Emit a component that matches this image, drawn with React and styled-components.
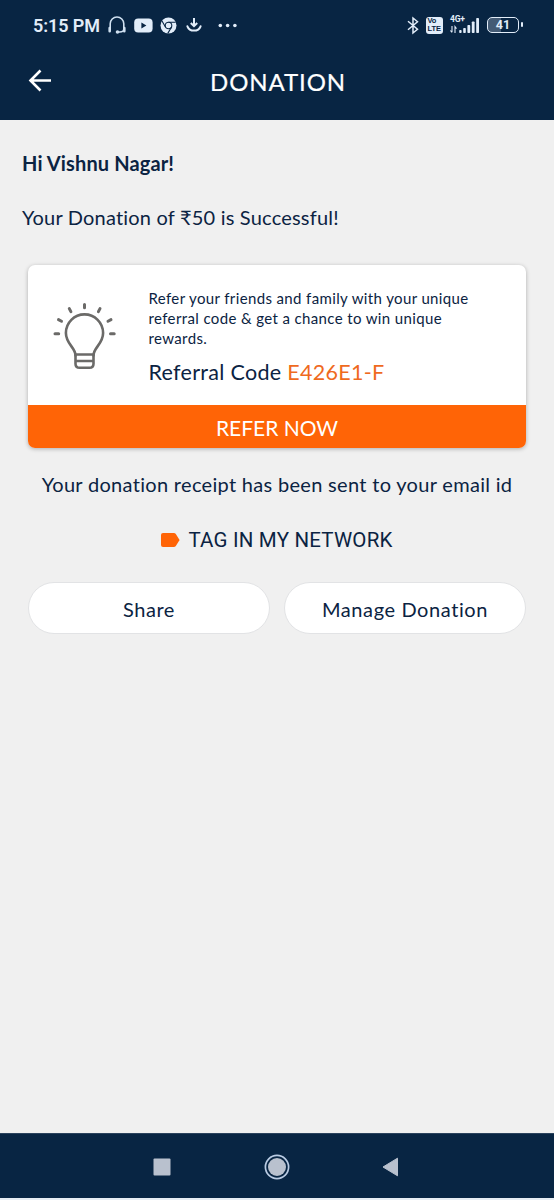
import React from 'react';
import styled, { createGlobalStyle } from 'styled-components';

const GlobalStyle = createGlobalStyle`
  * { box-sizing: border-box; }
  body { margin: 0; background: #f0f0f0; }
  svg { display: block; flex: none; }
`;

const navy = '#082543';
const orange = '#ff6406';
const ink = '#0b2342';

const Screen = styled.div`
  display: flex;
  flex-direction: column;
  width: 554px;
  height: 1200px;
  background: #f0f0f0;
  color: ${ink};
  font-family: Lato, 'Noto Sans', sans-serif;
  font-size: 20px;
  white-space: nowrap;
`;

const StatusBar = styled.div`
  display: flex;
  align-items: center;
  justify-content: space-between;
  height: 50px;
  padding: 0 35px 0 33px;
  background: ${navy};
  color: #e2edf9;
`;

const StatusGroup = styled.div`
  display: flex;
  align-items: center;
  height: 50px;
`;

const Clock = styled.span`
  width: 74px;
  padding-top: 1px;
  font: 600 18px/22px Roboto, sans-serif;
  letter-spacing: -0.1px;
`;

const Header = styled.header`
  display: grid;
  grid-template-columns: 80px 1fr 78px;
  align-items: center;
  height: 70px;
  padding-bottom: 8px;
  background: ${navy};
  color: #fff;
`;

const BackButton = styled.div`
  padding-left: 28px;
`;

const Title = styled.h1`
  margin: 2px 0 0;
  text-align: center;
  font-size: 24px;
  font-weight: 400;
  line-height: 30px;
  letter-spacing: ${(p) => p.$spacing}px;
  -webkit-text-stroke: 0.2px #fff;
`;

const Content = styled.main`
  flex: 1;
  padding: 31px 28px 0;
`;

const Greeting = styled.p`
  margin: 0 0 30px -6px;
  font-weight: ${(p) => (p.$strong ? 700 : 400)};
  line-height: 24px;
  letter-spacing: ${(p) => p.$spacing}px;
`;

const Card = styled.section`
  height: 183px;
  margin-top: 36px;
  overflow: hidden;
  border-radius: 7px;
  background: #fff;
  box-shadow: 0 1px 4px rgba(0, 0, 0, 0.28);
`;

const CardBody = styled.div`
  display: flex;
  height: 140px;
  padding: 23px 0 0 25px;
`;

const BulbSlot = styled.div`
  width: 95.5px;
  padding-top: 14px;
`;

const CardText = styled.p`
  margin: 0;
  font-size: 15px;
  line-height: 20px;
  letter-spacing: ${(p) => p.$spacing}px;
`;

const ReferralLine = styled.p`
  margin: 10px 0 0;
  font-size: 21.5px;
  line-height: 28px;
  letter-spacing: ${(p) => p.$spacing}px;
`;

const Code = styled.span`
  color: #ef6a1e;
`;

const ReferButton = styled.div`
  height: 43px;
  padding-top: 1px;
  background: ${orange};
  color: #fff;
  text-align: center;
  font-size: 21px;
  line-height: 44px;
  letter-spacing: ${(p) => p.$spacing}px;
`;

const Receipt = styled.p`
  margin: 24px 0 0;
  text-align: center;
  line-height: 24px;
  letter-spacing: ${(p) => p.$spacing}px;
`;

const TagLine = styled.div`
  display: flex;
  align-items: center;
  justify-content: center;
  gap: 8px;
  margin-top: 32px;
  font: 400 20.5px/24px Roboto, sans-serif;
  letter-spacing: ${(p) => p.$spacing}px;
`;

const Actions = styled.div`
  display: grid;
  grid-template-columns: 1fr 1fr;
  gap: 14px;
  margin-top: 30px;
`;

const PillButton = styled.div`
  height: 52px;
  padding-top: 1px;
  border: 1.5px solid #e2e3e5;
  border-radius: 26px;
  background: #fff;
  text-align: center;
  line-height: 50px;
  letter-spacing: ${(p) => p.$spacing}px;
`;

const NavBar = styled.nav`
  display: flex;
  align-items: center;
  height: 67px;
  padding: 2px 155px 0 153px;
  justify-content: space-between;
  border-top: 1px solid #2b435d;
  border-bottom: 2px solid #e6edf4;
  background: ${navy};
`;

const Icon = styled.svg`
  margin-left: ${(p) => p.$gap || 0}px;
`;

const Headphones = () => (
  <Icon width="20" height="20" viewBox="0 0 20 20" fill="none" stroke="#cfe0f0" strokeWidth="1.6">
    <path d="M3.2 14V8.8a6.8 6.8 0 0 1 13.6 0V14M16.8 14c0 2-1.5 3-4 3h-2" />
    <path d="M2.7 13v3.3M17.3 13v3.3" strokeWidth="2.6" strokeLinecap="round" />
    <circle cx="10.5" cy="17" r="1" fill="#cfe0f0" />
  </Icon>
);

const Video = () => (
  <Icon $gap={7} width="19" height="15" viewBox="0 0 19 15">
    <rect x="0.2" y="0.5" width="18.4" height="14" rx="4" fill="#e2edf9" />
    <path d="M7.4 4.6v5.8l5-2.9z" fill={navy} />
  </Icon>
);

const Browser = () => (
  <Icon $gap={7} width="17" height="17" viewBox="0 0 17 17">
    <circle cx="8.5" cy="8.5" r="8" fill="#e2edf9" />
    <circle cx="8.5" cy="8.5" r="3.3" fill="none" stroke={navy} strokeWidth="1.1" />
    <path d="M8.5 5.2h7.2M5.6 10.2 2 4M11.4 10.2l-3.6 6.2" stroke={navy} strokeWidth="1.1" fill="none" />
  </Icon>
);

const Download = () => (
  <Icon $gap={9} width="16" height="16" viewBox="0 0 16 16" fill="none" stroke="#e2edf9" strokeWidth="2">
    <path d="M8 1v7.5M4.8 6 8 9.2 11.2 6" />
    <path d="M1.4 9.3c1.1 3 3.4 4.3 6.6 4.3s5.5-1.3 6.6-4.3" strokeLinecap="round" />
  </Icon>
);

const More = () => (
  <Icon $gap={16} width="20" height="5" viewBox="0 0 20 5" fill="#e2edf9">
    <circle cx="2.3" cy="2.5" r="1.8" />
    <circle cx="9.6" cy="2.5" r="1.8" />
    <circle cx="16.9" cy="2.5" r="1.8" />
  </Icon>
);

const Bluetooth = () => (
  <Icon width="12" height="19" viewBox="0 0 12 19" fill="none" stroke="#e2edf9" strokeWidth="1.5">
    <path d="M1 5.2 10.5 13.2 6 17V2l4.5 3.8L1 13.8" />
  </Icon>
);

const VolteBadge = styled.div`
  display: flex;
  flex-direction: column;
  width: 17px;
  height: 17px;
  margin-left: 7px;
  padding: 0 0 0 1.5px;
  border-radius: 3px;
  background: #e2edf9;
  color: ${navy};
  font: 800 7.5px/8px 'Liberation Sans', sans-serif;
  letter-spacing: -0.1px;
`;

const BadgeLine = styled.span`
  display: block;
  height: 8px;
`;

const Signal = styled.div`
  display: flex;
  width: 30px;
  height: 18px;
  margin-left: 7px;
  svg { overflow: visible; }
`;

const NetworkType = styled.span`
  width: 9px;
  margin-top: -1px;
  font: 700 8.5px/9px Roboto, sans-serif;
  letter-spacing: -0.2px;
`;

const SignalBars = () => (
  <Icon width="21" height="18" viewBox="0 0 21 18" fill="#e2edf9">
    <rect x="0.2" y="14" width="2.4" height="3" rx="0.8" />
    <rect x="4.2" y="12" width="2.6" height="5" rx="0.8" />
    <rect x="8.4" y="9" width="2.8" height="8" rx="0.8" />
    <rect x="12.8" y="5.5" width="2.8" height="11.5" rx="0.8" />
    <rect x="17.2" y="2" width="2.8" height="15" rx="0.8" />
    <path d="M-7 10v6.3m-1.6-1.8L-7 16.3M-4 17v-6.3l1.5 2" fill="none" stroke="#e2edf9" strokeWidth="1.1" />
  </Icon>
);

const Battery = styled.div`
  position: relative;
  width: 32px;
  height: 16px;
  margin-left: 7px;
  border: 1.5px solid #e2edf9;
  border-radius: 5px;
  background: linear-gradient(90deg, #445b75 42%, transparent 42%);
  text-align: center;
  font: 700 12.5px/14px Roboto, sans-serif;
  &::after {
    content: '';
    position: absolute;
    top: 4px;
    right: -4.5px;
    width: 2px;
    height: 5px;
    border-radius: 1px;
    background: #e2edf9;
  }
`;

const BackArrow = () => (
  <svg width="24" height="24" viewBox="0 0 24 24" fill="none" stroke="#fff" strokeWidth="2.6">
    <path d="M23 11.5H2.5M12.5 1.5 2.5 11.5l10 10" />
  </svg>
);

const Bulb = () => (
  <svg width="64" height="69" viewBox="0 0 64 69" fill="none" stroke="#6b6a68" strokeWidth="2.6" strokeLinecap="round">
    <path d="M22.5 53.5c0-8-9.6-11.5-9.6-22.5a18.2 18.2 0 0 1 37.2 0c0 11-9.6 14.5-9.6 22.5" />
    <path d="M22.5 52.5v9.2c0 2.6 1.5 4.1 4.1 4.1h9.8c2.6 0 4.1-1.5 4.1-4.1v-9.2zM23 59h17" />
    <path d="M31.5 2.5v3.2M16.3 6.6l1.6 3M47 6.6l-1.6 3M5.5 17.6l3 1.6M58 17.6l-3 1.6M2 31.8h3.7M57.5 31.8h3.7" strokeWidth="3" />
  </svg>
);

const Tag = () => (
  <svg width="19" height="14" viewBox="0 0 19 14" fill={orange}>
    <path d="M2 0h10.8q1.3 0 2 .9L18.6 7l-3.8 6.1q-.7.9-2 .9H2q-2 0-2-2V2q0-2 2-2z" />
  </svg>
);

export default function App() {
  return (
    <Screen>
      <GlobalStyle />
      <StatusBar>
        <StatusGroup>
          <Clock>5:15 PM</Clock>
          <Headphones />
          <Video />
          <Browser />
          <Download />
          <More />
        </StatusGroup>
        <StatusGroup>
          <Bluetooth />
          <VolteBadge>
            <BadgeLine>Vo</BadgeLine>
            <BadgeLine>LTE</BadgeLine>
          </VolteBadge>
          <Signal>
            <NetworkType>4G+</NetworkType>
            <SignalBars />
          </Signal>
          <Battery>41</Battery>
        </StatusGroup>
      </StatusBar>
      <Header>
        <BackButton>
          <BackArrow />
        </BackButton>
        <Title $spacing={0.9}>DONATION</Title>
      </Header>
      <Content>
        <Greeting $strong $spacing={0.13}>Hi Vishnu Nagar!</Greeting>
        <Greeting $spacing={0.2}>Your Donation of ₹50 is Successful!</Greeting>
        <Card>
          <CardBody>
            <BulbSlot>
              <Bulb />
            </BulbSlot>
            <div>
              <CardText $spacing={0.37}>
                Refer your friends and family with your unique
                <br />
                referral code &amp; get a chance to win unique
                <br />
                rewards.
              </CardText>
              <ReferralLine $spacing={0.3}>
                Referral Code <Code>E426E1-F</Code>
              </ReferralLine>
            </div>
          </CardBody>
          <ReferButton $spacing={0}>REFER NOW</ReferButton>
        </Card>
        <Receipt $spacing={0.31}>Your donation receipt has been sent to your email id</Receipt>
        <TagLine $spacing={0.2}>
          <Tag />
          <span>TAG IN MY NETWORK</span>
        </TagLine>
        <Actions>
          <PillButton $spacing={0.55}>Share</PillButton>
          <PillButton $spacing={0.6}>Manage Donation</PillButton>
        </Actions>
      </Content>
      <NavBar>
        <svg width="18" height="18" viewBox="0 0 18 18">
          <rect x="0.5" y="0.5" width="17" height="17" rx="1" fill="#b9c1ce" />
        </svg>
        <svg width="26" height="26" viewBox="0 0 26 26">
          <circle cx="13" cy="13" r="11.6" fill="none" stroke="#b9cbe3" strokeWidth="1.7" />
          <circle cx="13" cy="13" r="9" fill="#b9c1ce" />
        </svg>
        <svg width="17" height="20" viewBox="0 0 17 20">
          <path d="M15.5 1.2v17.6L1 10z" fill="#b9c1ce" stroke="#b9c1ce" strokeLinejoin="round" />
        </svg>
      </NavBar>
    </Screen>
  );
}
